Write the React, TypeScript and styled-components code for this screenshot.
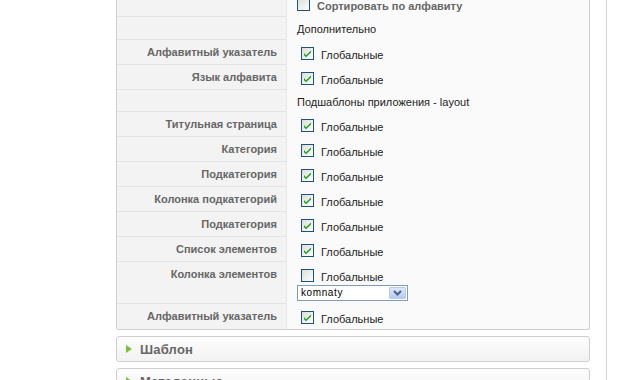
import React from 'react';
import styled, { createGlobalStyle } from 'styled-components';

const GlobalStyle = createGlobalStyle`
  html, body {
    margin: 0;
    padding: 0;
    background: #fff;
    overflow: hidden;
  }
  body {
    font-family: Tahoma, "Liberation Sans", Arial, sans-serif;
    font-size: 11px;
    color: #333;
  }
`;

// Styles
const Page = styled.div`
  box-sizing: border-box;
  width: 607px;
  height: 380px;
  padding: 0 16px 0 116px;
  border-right: 1px solid #d4d4d4;
  display: flex;
  flex-direction: column;
  gap: 6px;
`;

const Panel = styled.div`
  flex-shrink: 0;
  margin-top: -8px;
  border: 1px solid #cfcfcf;
  border-top: none;
  border-radius: 0 0 3px 3px;
  overflow: hidden;
  background: #fafafa;
`;

const Row = styled.div`
  display: grid;
  grid-template-columns: 170px 1fr;
`;

const Label = styled.div<{ $last?: boolean }>`
  box-sizing: border-box;
  border-right: 1px solid #e6e6e6;
  border-bottom: ${({ $last }) => ($last ? 'none' : '1px solid #e2e2e2')};
  background: #f3f3f3;
  padding: 5px 9px 0 0;
  text-align: right;
  font-weight: bold;
  line-height: 14px;
  color: #666;
`;

const Value = styled.div<{ $h: number }>`
  box-sizing: border-box;
  height: ${({ $h }) => $h}px;
  padding: 0 10px;
`;

const Caption = styled.div`
  padding-top: 5px;
  line-height: 14px;
  color: #222;
`;

const CheckLine = styled.div<{ $indent?: number; $top?: number }>`
  display: flex;
  align-items: flex-start;
  gap: 7px;
  height: 23px;
  padding-top: ${({ $top }) => $top ?? 7}px;
  padding-left: ${({ $indent }) => $indent ?? 4}px;
  box-sizing: border-box;
`;

const CheckText = styled.span<{ $bold?: boolean }>`
  line-height: 14px;
  margin-top: 1px;
  color: ${({ $bold }) => ($bold ? '#666' : '#222')};
  font-weight: ${({ $bold }) => ($bold ? 'bold' : 'normal')};
`;

const Select = styled.div`
  box-sizing: border-box;
  width: 111px;
  height: 16px;
  border: 1px solid #7f9db9;
  background: #fff;
  display: flex;
  align-items: stretch;
`;

const SelectText = styled.span`
  flex: 1;
  padding-left: 3px;
  line-height: 14px;
  font-size: 10px;
  letter-spacing: 0.6px;
  color: #000;
`;

const SelectButton = styled.span`
  width: 15px;
  margin: 1px;
  border: 1px solid #b9cbe8;
  border-radius: 1px;
  background: linear-gradient(#dde8fb, #b6cbef);
  display: flex;
  align-items: center;
  justify-content: center;
`;

const Slider = styled.div`
  box-sizing: border-box;
  height: 26px;
  border: 1px solid #cfcfcf;
  border-radius: 3px;
  background: linear-gradient(#fdfdfd, #f2f2f2);
  display: flex;
  align-items: center;
  gap: 8px;
  padding-left: 9px;
  flex-shrink: 0;
`;

const SliderTitle = styled.span`
  font-size: 13px;
  font-weight: bold;
  color: #666;
  letter-spacing: 0.2px;
`;

const Arrow = styled.span`
  width: 0;
  height: 0;
  border-top: 4px solid transparent;
  border-bottom: 4px solid transparent;
  border-left: 6px solid #78c038;
`;

const Check: React.FC<{ checked?: boolean }> = ({ checked }) => (
  <svg width="13" height="13" viewBox="0 0 13 13" style={{ flexShrink: 0 }}>
    <defs>
      <linearGradient id="cbg" x1="0" y1="0" x2="1" y2="1">
        <stop offset="0" stopColor="#dcdcd6" />
        <stop offset="1" stopColor="#ffffff" />
      </linearGradient>
    </defs>
    <rect x="0.5" y="0.5" width="12" height="12" fill="url(#cbg)" stroke="#1c5180" />
    {checked && (
      <path d="M3 6 L5 8.2 L10 3.4 L10 5.6 L5 10.2 L3 8.2 Z" fill="#21a121" />
    )}
  </svg>
);

const Chevron = () => (
  <svg width="9" height="6" viewBox="0 0 9 6">
    <path d="M1 1 L4.5 4.5 L8 1" fill="none" stroke="#4d6185" strokeWidth="2" />
  </svg>
);

type Item =
  | { kind: 'caption'; text: string }
  | { kind: 'check'; label: string; checked: boolean; select?: string };

const items: Item[] = [
  { kind: 'caption', text: 'Дополнительно' },
  { kind: 'check', label: 'Алфавитный указатель', checked: true },
  { kind: 'check', label: 'Язык алфавита', checked: true },
  { kind: 'caption', text: 'Подшаблоны приложения - layout' },
  { kind: 'check', label: 'Титульная страница', checked: true },
  { kind: 'check', label: 'Категория', checked: true },
  { kind: 'check', label: 'Подкатегория', checked: true },
  { kind: 'check', label: 'Колонка подкатегорий', checked: true },
  { kind: 'check', label: 'Подкатегория', checked: true },
  { kind: 'check', label: 'Список элементов', checked: true },
  { kind: 'check', label: 'Колонка элементов', checked: false, select: 'komnaty' },
  { kind: 'check', label: 'Алфавитный указатель', checked: true },
];

const App: React.FC = () => {
  return (
    <Page>
      <GlobalStyle />
      <Panel>
        <Row>
          <Label />
          <Value $h={25}>
            <CheckLine $indent={0} $top={6}>
              <Check />
              <CheckText $bold>Сортировать по алфавиту</CheckText>
            </CheckLine>
          </Value>
        </Row>

        {items.map((item, i) => {
          const last = i === items.length - 1;
          if (item.kind === 'caption') {
            return (
              <Row key={i}>
                <Label />
                <Value $h={i === 0 ? 23 : 22}>
                  <Caption>{item.text}</Caption>
                </Value>
              </Row>
            );
          }
          return (
            <Row key={i}>
              <Label $last={last}>{item.label}</Label>
              <Value $h={item.select ? 42 : 25}>
                <CheckLine>
                  <Check checked={item.checked} />
                  <CheckText>Глобальные</CheckText>
                </CheckLine>
                {item.select && (
                  <Select>
                    <SelectText>{item.select}</SelectText>
                    <SelectButton>
                      <Chevron />
                    </SelectButton>
                  </Select>
                )}
              </Value>
            </Row>
          );
        })}
      </Panel>

      <Slider>
        <Arrow />
        <SliderTitle>Шаблон</SliderTitle>
      </Slider>
      <Slider>
        <Arrow />
        <SliderTitle>Метаданные</SliderTitle>
      </Slider>
    </Page>
  );
};

export default App;
